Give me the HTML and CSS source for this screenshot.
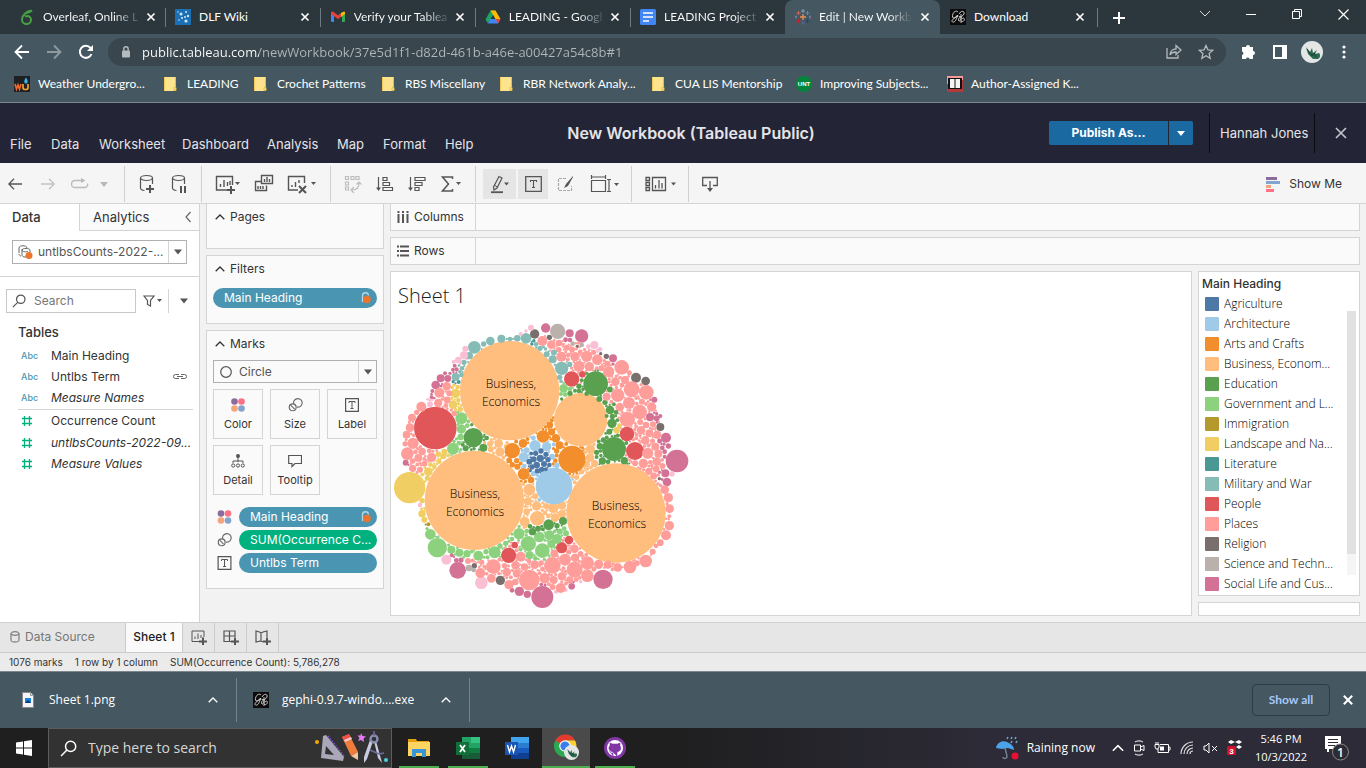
FILE: index.html
```html
<!DOCTYPE html>
<html lang="en">
<head>
<meta charset="utf-8">
<title>Edit | New Workbook | Tableau Public</title>
<link rel="stylesheet" href="styles.css">
</head>
<body>
<svg class="defs" aria-hidden="true">
  <symbol id="x" viewBox="0 0 10 10"><path d="M1.500 1.500l7 7M8.500 1.500l-7 7" fill="none" stroke="currentColor" stroke-width="1.700"/></symbol>
  <symbol id="caret" viewBox="0 0 8 5"><path d="M0 0h8L4 5z" fill="currentColor"/></symbol>
  <symbol id="up" viewBox="0 0 10 6"><path d="M.7 5.300L5 1l4.300 4.300" fill="none" stroke="currentColor" stroke-width="1.300"/></symbol>
  <symbol id="folder" viewBox="0 0 16 16"><path d="M2 1h10v11h1v3H2z" fill="#ffe38c"/><path d="M12.500 1v10M11 14.500v-3h2v3z" stroke="#e8bd3f" fill="#ffe38c"/><path d="M1.500 1v14" stroke="#f3cb5a"/></symbol>
  <symbol id="gephi" viewBox="0 0 16 16"><path fill="#0c0c0c" d="M0 0h16v16H0z"/><path d="M8 3c-2-2-5 0-5.500 3.500S5 10 7.500 6c-1 5-3 8-5 7s2-5 6-6M9 5c2-4 6-3 5 0-1 2-3 3-5 3 2-1 3 1 1.500 3S8 12 9 9m2 5V5m1 5c2-2 3 0 2 1.500s-2 1-3 .5" fill="none" stroke="#ddd" stroke-width=".9"/></symbol>
  <symbol id="colors" viewBox="0 0 14 14"><circle cx="3.500" cy="3.500" r="3.300" fill="#8a6d9c"/><circle cx="10.500" cy="3.500" r="3.300" fill="#fb7185"/><circle cx="3.500" cy="10.500" r="3.300" fill="#f4a57c"/><circle cx="10.500" cy="10.500" r="3.300" fill="#82a4cd"/></symbol>
  <symbol id="size" viewBox="0 0 15 15"><g fill="none" stroke="#666" stroke-width="1.200"><path d="M5.500 6A4.600 4.600 0 1 1 9 9.700"/><circle cx="4.500" cy="10" r="3.700"/><path d="M2.500 8l4 4"/></g></symbol>
  <symbol id="label" viewBox="0 0 14 14"><path d="M.6.6h12.800v12.800H.6z" fill="#fafafa" stroke="#555" stroke-width="1.200"/><path d="M4 5V3.500h6V5M7 3.500v7M5.500 10.500h3" fill="none" stroke="#555"/></symbol>
  <symbol id="db" viewBox="0 0 16 19"><path d="M1.500 4v10c0 1.500 2 2.300 4 2.500M13.500 4v6" fill="none" stroke="currentColor" stroke-width="1.200"/><ellipse cx="7.500" cy="4" rx="6" ry="2.500" fill="none" stroke="currentColor" stroke-width="1.200"/></symbol>
  <symbol id="lock" viewBox="0 0 10 12"><path d="M1.500 10V4a3 3 0 0 1 6-.5" fill="none" stroke="#b9d5e1" stroke-width="1.300"/><circle cx="6" cy="7.500" r="3.800" fill="#eb762b"/></symbol>
  <symbol id="hash" viewBox="0 0 12 12"><path d="M3.500 1v10M8.500 1v10M1 3.500h10M1 8.500h10" fill="none" stroke="#00b180" stroke-width="1.300"/></symbol>
  <symbol id="search" viewBox="0 0 16 16"><circle cx="10" cy="6" r="4.800" fill="none" stroke="currentColor" stroke-width="1.400"/><path d="M6.500 9.500L1 15" stroke="currentColor" stroke-width="1.400"/></symbol>
  <symbol id="avatar" viewBox="0 0 22 22"><circle cx="11" cy="11" r="11" fill="#e4e6e6"/><path d="M5 6l3 4 1 1 2-4 1 5 4-3-2 4 4-1c2 2 1 5-1 6h-5l-3-3-2-2z" fill="#2d6b50"/><path d="M6 8l5 7 2-3 2 4" stroke="#163f31" fill="none"/></symbol>
</svg>

<header class="tabstrip">
  <button class="tab"><svg class="i16" viewBox="0 0 16 16"><path d="M12.500 1.500C8 2 3 6 3 10.500a4.500 4.500 0 1 0 9 0C12 7.500 9 6 6 7.500M7 4c2-1 4 0 6-2.500" fill="none" stroke="#47a141" stroke-width="2"/></svg><span>Overleaf, Online L</span><svg class="i10"><use href="#x"/></svg></button>
  <button class="tab"><svg class="i16" viewBox="0 0 16 16"><path fill="#1b6fb5" d="M0 0h16v16H0z"/><g fill="#cfe6f7"><circle cx="6" cy="5" r="1.500"/><circle cx="11" cy="3" r="1"/><circle cx="13" cy="7" r="1.200"/><circle cx="11" cy="12" r="1.600"/><circle cx="7" cy="9" r="1.100"/><circle cx="3" cy="3" r=".7"/><circle cx="4" cy="11" r=".8"/><circle cx="10" cy="8" r="1"/></g></svg><span class="full">DLF Wiki</span><svg class="i10"><use href="#x"/></svg></button>
  <button class="tab"><svg class="i16" viewBox="0 0 16 16"><path d="M1 3h3v10H2a1 1 0 0 1-1-1z" fill="#4285f4"/><path d="M12 3h3v9a1 1 0 0 1-1 1h-2z" fill="#34a853"/><path d="M1 3l2-.5L8 6.500l3-2.500v4L8 10 1 5z" fill="#ea4335"/><path d="M11 4l3-1.500 1 .5v2l-4 3z" fill="#fbbc04"/></svg><span>Verify your Tablea</span><svg class="i10"><use href="#x"/></svg></button>
  <button class="tab"><svg class="i16" viewBox="0 0 16 16"><path d="M5.500 1.500h5L6 9.500l-3 5-2.500-4z" fill="#1ea362"/><path d="M5.500 1.500h5l5 8.500h-5z" fill="#ffba00"/><path d="M5 10h10.500L13 14.500H3z" fill="#4285f4"/><path d="M13 14.500l2.500-4.500h-5z" fill="#ea4335"/></svg><span>LEADING - Googl</span><svg class="i10"><use href="#x"/></svg></button>
  <button class="tab"><svg class="i16" viewBox="0 0 16 16"><rect width="16" height="16" rx="1.500" fill="#4285f4"/><path d="M3 4h10M3 8h10M3 12h6" stroke="#fff" stroke-width="1.700"/></svg><span>LEADING Project</span><svg class="i10"><use href="#x"/></svg></button>
  <button class="tab active"><svg class="i16" viewBox="0 0 16 16"><path d="M8 5v6M5 8h6" stroke="#f28e4c" stroke-width="1.300"/><path d="M8 0v4M6 2h4" stroke="#7fa5b8"/><path d="M8 12v4M6 14h4" stroke="#5a6591"/><path d="M3.500 2v4M1.500 4h4" stroke="#c9695b"/><path d="M12.500 2v4M10.500 4h4" stroke="#5f88b5"/><path d="M3.500 10v4M1.500 12h4" stroke="#c72035"/><path d="M12.500 10v4M10.500 12h4" stroke="#1f447e"/><path d="M1 6.500v3M0 8h2M15 6.500v3M14 8h2" stroke="#7a84a8"/></svg><span>Edit | New Workb</span><svg class="i10"><use href="#x"/></svg></button>
  <button class="tab"><svg class="i16"><use href="#gephi"/></svg><span class="full">Download</span><svg class="i10"><use href="#x"/></svg></button>
  <button class="newtab" aria-label="New tab"><svg width="12" height="12"><path d="M6 0v12M0 6h12" stroke="#fff" stroke-width="2"/></svg></button>
  <div class="winctl">
    <button aria-label="Search tabs"><svg width="12" height="8" viewBox="0 0 12 8"><path d="M1 1l5 5 5-5" fill="none" stroke="#ddd"/></svg></button>
    <button aria-label="Minimize"><svg width="10" height="10"><path d="M0 5.500h10" stroke="#fff"/></svg></button>
    <button aria-label="Restore"><svg width="10" height="10"><path d="M.5 2.500h7v7h-7zM2.500 2.500v-2h7v7h-2" fill="none" stroke="#fff"/></svg></button>
    <button aria-label="Close"><svg width="11" height="11"><path d="M.5.5l10 10M10.500.5l-10 10" stroke="#fff" stroke-width="1.200"/></svg></button>
  </div>
</header>

<div class="navbar">
  <button aria-label="Back"><svg width="16" height="16"><path d="M15 8H2M8 1.500L1.500 8 8 14.500" fill="none" stroke="#fff" stroke-width="1.800"/></svg></button>
  <button aria-label="Forward"><svg width="16" height="16"><path d="M1 8h13M8 1.500L14.500 8 8 14.500" fill="none" stroke="#8f9a9f" stroke-width="1.800"/></svg></button>
  <button aria-label="Reload"><svg width="16" height="16"><path d="M13.500 10A6 6 0 1 1 12.500 4L14 6" fill="none" stroke="#fff" stroke-width="2"/><path d="M15 1v6H9z" fill="#fff"/></svg></button>
  <div class="omnibox">
    <svg width="10" height="14" viewBox="0 0 10 14"><rect x="1" y="5.500" width="8" height="7" rx="1" fill="#b4babd"/><path d="M2.800 6V4a2.200 2.200 0 0 1 4.400 0v2" fill="none" stroke="#b4babd" stroke-width="1.400"/></svg>
    <input class="url" aria-label="Address" value="public.tableau.com/newWorkbook/37e5d1f1-d82d-461b-a46e-a00427a54c8b#1">
    <button aria-label="Share"><svg width="16" height="15"><path d="M1 4v10h11v-3M4 11c0-4 3-6 6-6V1.500L15 6l-5 4.500V8c-3 0-5 1-6 3z" fill="none" stroke="#b4babd" stroke-width="1.300"/></svg></button>
    <button aria-label="Bookmark"><svg width="16" height="16"><path d="M8 1.500l2 4.500 4.700.4-3.600 3.200 1.100 4.700L8 11.800l-4.200 2.500 1.100-4.700L1.300 6.400 6 6z" fill="none" stroke="#b4babd" stroke-width="1.300"/></svg></button>
  </div>
  <button aria-label="Extensions"><svg width="16" height="16"><path d="M6 3a2 2 0 0 1 4 0h3v4a2 2 0 0 1 0 4v4h-3.500a1.800 1.800 0 0 0-3.500 0H2v-4a1.800 1.800 0 0 0 0-3.500V3z" fill="#fff"/></svg></button>
  <button aria-label="Side panel"><svg width="14" height="14"><path d="M0 0h14v14H0zM2 2v10h7V2z" fill="#fff" fill-rule="evenodd"/></svg></button>
  <button class="profile" aria-label="Profile"><svg width="22" height="22"><use href="#avatar"/></svg></button>
  <button aria-label="Menu"><svg width="4" height="14"><g fill="#fff"><circle cx="2" cy="2" r="1.600"/><circle cx="2" cy="7" r="1.600"/><circle cx="2" cy="12" r="1.600"/></g></svg></button>
</div>

<nav class="bookmarks">
  <a href="#"><svg class="i16" viewBox="0 0 16 16"><path fill="#1e2023" d="M0 0h16v16H0z"/><path d="M1 8l1.500 5L4 9l1.500 4L7 8" fill="none" stroke="#f0662f" stroke-width="1.700"/><path d="M9 8v4c0 2 5 2 5 0V8" fill="none" stroke="#f6a127" stroke-width="1.700"/><path d="M12 1.500c3 4 1.500 6 0 6s-3-2 0-6z" fill="#3bb3ec"/></svg>Weather Undergro...</a>
  <a href="#"><svg class="i16"><use href="#folder"/></svg>LEADING</a>
  <a href="#"><svg class="i16"><use href="#folder"/></svg>Crochet Patterns</a>
  <a href="#"><svg class="i16"><use href="#folder"/></svg>RBS Miscellany</a>
  <a href="#"><svg class="i16"><use href="#folder"/></svg>RBR Network Analy...</a>
  <a href="#"><svg class="i16"><use href="#folder"/></svg>CUA LIS Mentorship</a>
  <a href="#"><svg class="i16" viewBox="0 0 16 16"><circle cx="8" cy="8" r="8" fill="#05853b"/><text x="8" y="10" class="unt">UNT</text></svg>Improving Subjects...</a>
  <a href="#"><svg class="i16" viewBox="0 0 16 16"><path fill="#b33a3c" d="M0 0h16v16H0z"/><path fill="#f79a9a" d="M0 0h16v4L0 8z"/><path fill="#111" d="M1 2h14v11H1z"/><path d="M3 3h4.500v9H3zM8.500 3H13v9H8.500z" fill="#f4f4f4"/></svg>Author-Assigned K...</a>
</nav>

<div class="apphead">
  <nav class="menu"><button>File</button><button>Data</button><button>Worksheet</button><button>Dashboard</button><button>Analysis</button><button>Map</button><button>Format</button><button>Help</button></nav>
  <h1>New Workbook (Tableau Public)</h1>
  <div class="account">
    <button class="publish">Publish As...</button><button class="publish more" aria-label="Publish options"><svg width="8" height="5"><use href="#caret"/></svg></button>
    <a class="user" href="#">Hannah Jones</a>
    <button class="quit" aria-label="Close workbook"><svg width="12" height="12" viewBox="0 0 12 12"><path d="M1 1l10 10M11 1L1 11" stroke="#c2c3c9" stroke-width="1.700"/></svg></button>
  </div>
</div>

<div class="toolbar">
  <div class="grp g1">
    <button class="w30" aria-label="Undo"><svg width="14" height="12"><path d="M14 6H1M6 .8L.8 6 6 11.200" fill="none" stroke="#555" stroke-width="1.300"/></svg></button>
    <button class="w36" aria-label="Redo"><svg width="14" height="12"><path d="M0 6h13M8 .8L13.200 6 8 11.200" fill="none" stroke="#c1c1c1" stroke-width="1.300"/></svg></button>
    <button class="w28" aria-label="Replay"><svg width="18" height="12"><path d="M13 2.500H4a3.300 3.300 0 0 0 0 7h10a3 3 0 0 0 2.500-4" fill="none" stroke="#bbb" stroke-width="1.300"/><path d="M10 0l4.500 2.500L10 5z" fill="#bbb"/></svg></button>
    <button class="w20" aria-label="Replay speed"><svg width="8" height="5" class="dim"><use href="#caret"/></svg></button>
  </div>
  <div class="grp g2">
    <button class="w32" aria-label="New data source"><svg width="16" height="20"><svg width="16" height="19"><use href="#db"/></svg><path d="M11 11v8M7 15h8" stroke="#555" stroke-width="2"/></svg></button>
    <button class="w32" aria-label="Pause updates"><svg width="16" height="20"><svg width="16" height="19"><use href="#db"/></svg><path d="M10 12v7M14 12v7" stroke="#555" stroke-width="2"/></svg></button>
  </div>
  <div class="grp g3">
    <button class="w36" aria-label="New worksheet"><svg width="26" height="20"><path d="M12 16H1.500V2.500h16V11M5.500 13v-3M9 13V6M12.500 12V8M15 11V7" fill="none" stroke="#555" stroke-width="1.400"/><path d="M16 12v8M12 16h8" stroke="#555" stroke-width="2"/><path d="M20 8h5l-2.500 3z" fill="#555"/></svg></button>
    <button class="w36" aria-label="Duplicate"><svg width="20" height="20"><path d="M7.500 1.500h11v8h-11zM7 7.500H1.500v9h11v-5M4 15v-3M6.500 15v-3M9 15v-3M10.500 8V5M13 8V3M15.500 8V5" fill="none" stroke="#555" stroke-width="1.400"/></svg></button>
    <button class="w40" aria-label="Clear"><svg width="30" height="20"><path d="M11 16H1.500V2.500h16V9M5 13v-2M8.500 13V8M12 9V6" fill="none" stroke="#555" stroke-width="1.400"/><path d="M12 12l7 7M19 12l-7 7" stroke="#555" stroke-width="2"/><path d="M24 8h5l-2.500 3z" fill="#555"/></svg></button>
  </div>
  <div class="grp g4">
    <button class="w32" aria-label="Swap"><svg width="18" height="18"><path d="M1.500 1.500h3v3h-3zM7 1.500h3v3H7zM12 1.500h3v3h-3zM1.500 7h3v3h-3zM1.500 12h3v3h-3zM8 15c5 0 7-3 7-7M10 12l-3 3 3 3M12.500 9.500L15 7l2.500 2.500" fill="none" stroke="#bcbcbc" stroke-width="1.200"/></svg></button>
    <button class="w32" aria-label="Sort ascending"><svg width="18" height="18"><path d="M2.500 2v12M7 2.500h4v3H7zM7 7.500h6.500v3H7zM7 12.500h9.500v3H7z" fill="none" stroke="#555" stroke-width="1.200"/><path d="M0 12.500h5L2.500 16z" fill="#555"/></svg></button>
    <button class="w32" aria-label="Sort descending"><svg width="18" height="18"><path d="M2.500 2v12M7 2.500h10v3H7zM7 7.500h7v3H7zM7 12.500h4v3H7z" fill="none" stroke="#555" stroke-width="1.200"/><path d="M0 12.500h5L2.500 16z" fill="#555"/></svg></button>
    <button class="w36" aria-label="Totals"><svg width="20" height="18"><path d="M11.500 4V2H1.500l6 7-6 7h10v-2" fill="none" stroke="#555" stroke-width="1.500"/><path d="M15 7h5l-2.500 3z" fill="#555"/></svg></button>
  </div>
  <div class="grp g5">
    <button class="w33 on" aria-label="Highlight"><svg width="20" height="20"><path d="M3.500 13L9 2.500l3 1.500L7 14l-3 2z" fill="none" stroke="#555" stroke-width="1.200"/><path d="M4 11l3.500 2" stroke="#555"/><path d="M1 18.200h12" stroke="#555" stroke-width="1.800"/><path d="M14 8.500h5l-2.500 3z" fill="#555"/></svg></button>
    <button class="w30 on" aria-label="Show labels"><svg width="17" height="16"><path d="M.7.7h15.600v14.600H.7z" fill="none" stroke="#555" stroke-width="1.300"/><path d="M5.500 6V4.500h6V6M8.500 4.500v7M7 11.500h3" fill="none" stroke="#555" stroke-width="1.100"/></svg></button>
    <button class="w32" aria-label="Format"><svg width="18" height="18"><path d="M9 3.500H1.500v12h13V11" fill="none" stroke="#aaa" stroke-width="1.200" stroke-dasharray="3 1"/><path d="M16 1l-7 8-2 4 4-2 5-9z" fill="#555"/></svg></button>
    <button class="w40" aria-label="Fit"><svg width="29" height="18"><path d="M1.500 5.500h14v11h-14zM1 2h15M1.500 0v4M15.500 0v4M19 5v11M17 4.500h4M17 16.500h4" fill="none" stroke="#555" stroke-width="1.200"/><path d="M24 8h5l-2.500 3z" fill="#555"/></svg></button>
  </div>
  <div class="grp g6"><button class="w40" aria-label="Show cards"><svg width="31" height="16"><path d="M1 1.500h3.500v3H1zM1 6.500h3.500v3H1zM1 11.500h3.500v3H1zM7.500 1.500h13v13h-13zM10.500 12.500V9M14 12.500V4M17 12.500V7" fill="none" stroke="#555" stroke-width="1.300"/><path d="M26 6.500h5L28.500 9.500z" fill="#555"/></svg></button></div>
  <div class="grp g7"><button class="w32" aria-label="Download"><svg width="16" height="16"><path d="M5 9.500H.7V1.500h14.600v8H11M8 5v8" fill="none" stroke="#555" stroke-width="1.300"/><path d="M5 12h6l-3 4z" fill="#555"/></svg></button></div>
  <button class="showme"><svg width="14" height="15"><path fill="#8a6d9c" d="M0 0h11v3H0z"/><path fill="#82a4cd" d="M0 4h14v3H0z"/><path fill="#f4a57c" d="M0 8h5v3H0z"/><path fill="#fb7185" d="M0 12h8v3H0z"/></svg>Show Me</button>
</div>

<main class="work">
  <aside class="data">
    <div class="panetabs"><button class="cur">Data</button><button class="other">Analytics<svg width="6" height="12"><path d="M5.500 1L1 6l4.500 5" fill="none" stroke="#666" stroke-width="1.200"/></svg></button></div>
    <div class="source"><div class="pick"><svg width="15" height="14"><path d="M9 12H7c-2 0-3-1-3-2V4M1 9c0 1 1 2 2 2M1 8V3c0-3 8-3 8 0M4 5c0-2 8-2 8 0v2M4 5c0 2 4 2 6 1.500" fill="none" stroke="#666"/><circle cx="11" cy="10.500" r="3.500" fill="#eb762b"/></svg><select aria-label="Data source"><option>untlbsCounts-2022-...</option></select><i><svg width="8" height="6"><use href="#caret"/></svg></i></div></div>
    <div class="find"><label class="findbox"><svg width="14" height="14"><use href="#search"/></svg><input placeholder="Search" aria-label="Search fields"></label><button aria-label="Filter fields"><svg width="19" height="12"><path d="M1 1h10L7.500 5.500V11l-3-1.500v-4z" fill="none" stroke="#555" stroke-width="1.200"/><path d="M14 4h5l-2.500 3z" fill="#555"/></svg></button><button class="viewas" aria-label="View options"><svg width="8" height="6"><use href="#caret"/></svg></button></div>
    <h2>Tables</h2>
    <ul class="fields">
      <li><b>Abc</b>Main Heading</li>
      <li><b>Abc</b>Untlbs Term<svg class="link" width="16" height="7"><path d="M7 1.500H3.500a2 2 0 0 0 0 4H7M9 1.500h3.500a2 2 0 0 1 0 4H9M5 3.500h6" fill="none" stroke="#666"/></svg></li>
      <li class="it"><b>Abc</b>Measure Names</li>
      <li class="first"><svg width="12" height="12"><use href="#hash"/></svg>Occurrence Count</li>
      <li class="it"><svg width="12" height="12"><use href="#hash"/></svg>untlbsCounts-2022-09...</li>
      <li class="it"><svg width="12" height="12"><use href="#hash"/></svg>Measure Values</li>
    </ul>
  </aside>

  <section class="cards">
    <div class="card pages"><h3><svg width="10" height="6"><use href="#up"/></svg>Pages</h3></div>
    <div class="card filters"><h3><svg width="10" height="6"><use href="#up"/></svg>Filters</h3><button class="pill">Main Heading<svg width="10" height="12"><use href="#lock"/></svg></button></div>
    <div class="card marks"><h3><svg width="10" height="6"><use href="#up"/></svg>Marks</h3>
      <div class="pick type"><svg width="12" height="12"><circle cx="6" cy="6" r="5.300" fill="none" stroke="#555" stroke-width="1.200"/></svg><select aria-label="Mark type"><option>Circle</option></select><i><svg width="8" height="6"><use href="#caret"/></svg></i></div>
      <div class="enc">
        <button><svg width="14" height="14"><use href="#colors"/></svg>Color</button>
        <button><svg width="15" height="14"><use href="#size"/></svg>Size</button>
        <button><svg width="14" height="14"><use href="#label"/></svg>Label</button>
        <button><svg width="14" height="14"><circle cx="7" cy="2" r="2" fill="#555"/><path d="M7 3v5M2 9V7h10v2" fill="none" stroke="#555"/><g fill="none" stroke="#555"><circle cx="2.200" cy="11.500" r="1.600"/><circle cx="7" cy="11.500" r="1.600"/><circle cx="11.800" cy="11.500" r="1.600"/></g></svg>Detail</button>
        <button><svg width="14" height="14"><path d="M.7 1.500h12.800v8H7l-3 3v-3H.7z" fill="none" stroke="#555" stroke-width="1.200"/></svg>Tooltip</button>
      </div>
      <div class="pillrow"><svg width="14" height="14"><use href="#colors"/></svg><button class="pill">Main Heading<svg width="10" height="12"><use href="#lock"/></svg></button></div>
      <div class="pillrow"><svg width="15" height="14"><use href="#size"/></svg><button class="pill green">SUM(Occurrence C...</button></div>
      <div class="pillrow"><svg width="14" height="14"><use href="#label"/></svg><button class="pill">Untlbs Term</button></div>
    </div>
  </section>

  <section class="viz">
    <div class="shelf"><span><svg width="12" height="12"><path d="M1.500 0v2M6 0v2M10.500 0v2M1.500 3v9M6 3v9M10.500 3v9" stroke="#555" stroke-width="2"/></svg>Columns</span></div>
    <div class="shelf"><span><svg width="12" height="12"><path d="M0 1.500h2M0 6h2M0 10.500h2M3 1.500h9M3 6h9M3 10.500h9" stroke="#555" stroke-width="2"/></svg>Rows</span></div>
    <div class="split">
      <div class="sheet"><h2>Sheet 1</h2><svg id="bubbles" width="300" height="298" viewBox="1 2 300 298" role="img" aria-label="Packed bubbles by main heading"></svg></div>
      <div class="side">
        <div class="legend"><h4>Main Heading</h4><ul>
          <li><i class="c1"></i>Agriculture</li><li><i class="c2"></i>Architecture</li><li><i class="c3"></i>Arts and Crafts</li><li><i class="c4"></i>Business, Econom...</li><li><i class="c5"></i>Education</li><li><i class="c6"></i>Government and L...</li><li><i class="c7"></i>Immigration</li><li><i class="c8"></i>Landscape and Na...</li><li><i class="c9"></i>Literature</li><li><i class="c10"></i>Military and War</li><li><i class="c11"></i>People</li><li><i class="c12"></i>Places</li><li><i class="c13"></i>Religion</li><li><i class="c14"></i>Science and Techn...</li><li><i class="c15"></i>Social Life and Cus...</li>
        </ul><div class="scroll"><div></div></div></div>
        <div class="extra"></div>
      </div>
    </div>
  </section>
</main>

<nav class="sheets">
  <button class="ds"><svg width="10" height="12"><path d="M1 2.500v7c0 2 8 2 8 0v-7" fill="none" stroke="#666"/><ellipse cx="5" cy="2.500" rx="4" ry="1.800" fill="none" stroke="#666"/></svg>Data Source</button>
  <button class="curr">Sheet 1</button>
  <button class="add" aria-label="New worksheet"><svg width="16" height="15"><path d="M8 11.500H1V1h12v6M4 9V6.500M7 9V3.500M10 8V5" fill="none" stroke="#555"/><path d="M12 7.500v8M8 11.500h8" stroke="#555" stroke-width="2"/></svg></button>
  <button class="add" aria-label="New dashboard"><svg width="16" height="15"><path d="M8 11.500H1V1h11v6M1 6h11M6.500 1v10" fill="none" stroke="#555" stroke-width="1.200"/><path d="M12 7.500v8M8 11.500h8" stroke="#555" stroke-width="2"/></svg></button>
  <button class="add" aria-label="New story"><svg width="16" height="15"><path d="M8 12l-2-1-5 1V1l3.500 1L6 3l2-1 4-1v6M6 3v8" fill="none" stroke="#555" stroke-width="1.200"/><path d="M12 7.500v8M8 11.500h8" stroke="#555" stroke-width="2"/></svg></button>
</nav>
<footer class="status"><span>1076 marks</span><span>1 row by 1 column</span><span>SUM(Occurrence Count): 5,786,278</span></footer>

<div class="downloads">
  <button class="dl"><svg class="i16" viewBox="0 0 16 16"><path d="M2.500.5h8l3 3v12h-11z" fill="#f5f5f5" stroke="#8a8a8a"/><path d="M10.500.5v3h3" fill="#ddd" stroke="#999"/><path d="M5 6h6v5H5z" fill="#1683d8"/><path d="M5 11l3-3 3 3z" fill="#0a3a78"/></svg><span>Sheet 1.png</span><svg width="10" height="6"><use href="#up"/></svg></button>
  <button class="dl"><svg class="i16"><use href="#gephi"/></svg><span>gephi-0.9.7-windo....exe</span><svg width="10" height="6"><use href="#up"/></svg></button>
  <button class="showall">Show all</button>
  <button class="dlx" aria-label="Close downloads"><svg width="12" height="12"><use href="#x"/></svg></button>
</div>

<div class="taskbar">
  <button class="start" aria-label="Start"><svg width="16" height="16"><path d="M0 2.500l7-1v6H0zM8 1.300L16 0v7.500H8zM0 8.500h7v6l-7-1zM8 8.500h8V16l-8-1.300z" fill="#fff"/></svg></button>
  <label class="tsearch"><svg width="17" height="17" viewBox="0 0 16 16"><use href="#search"/></svg><input placeholder="Type here to search" aria-label="Type here to search">
    <svg width="76" height="34" viewBox="0 0 76 34"><circle cx="4" cy="11" r="2" fill="#f5a800"/><path d="M10 5l3-1 18 22-1 4-22-3z" fill="#a9a7b8"/><path d="M13 15l8 9-9-1z" fill="#333"/><path d="M15 5l16 20" stroke="#8152d8" stroke-dasharray="1.500 1.500" stroke-width="1.500"/><path d="M29 6l7-3 9 18-7 4z" fill="#f07c3c"/><path d="M29 6l7-3 2 4-7 3z" fill="#f0523f"/><path d="M31 9l7-3 1 2-7 3z" fill="#f4c9da"/><path d="M38 25l7-4 0 8z" fill="#efc7a4"/><path d="M48 2l1.500 3 3.500.5-2.500 2 .5 3.500-3-2-3 1 1.500-3-2-2.500 3 0z" fill="#e97af5"/><path d="M60 10l-6 18-3 4v-6l6-17zM63 10l5 18 1 4-4-5-4-17z" fill="#c9cae0"/><circle cx="61" cy="8" r="3.500" fill="none" stroke="#8d8fb2" stroke-width="2.300"/><path d="M61 0v5M57 19l9 4 5-1" stroke="#6d6f9d" stroke-width="1.500" fill="none"/><circle cx="73" cy="29" r="2" fill="#4cd0e0"/></svg></label>
  <button class="app run" aria-label="File Explorer"><svg width="22" height="20"><path d="M0 1h8l1 2h12v4H0z" fill="#e2a113"/><path d="M0 4h22v14H0z" fill="#fdd462"/><path d="M4 19v-8h14v8h-4v-4H8v4z" fill="#3a94d8"/></svg></button>
  <button class="app run" aria-label="Excel"><svg width="24" height="22"><path d="M6 0h18v22H6z" fill="#21a366"/><path d="M15 0h9v6h-9z" fill="#33c481"/><path d="M6 11h18v5H6z" fill="#107c41"/><path d="M6 16h18v6H6z" fill="#185c37"/><path d="M0 5h13v13H0z" fill="#0f7038"/><path d="M4 8l5 7M9 8l-5 7" stroke="#fff" stroke-width="1.800"/></svg></button>
  <button class="app" aria-label="Word"><svg width="24" height="22"><path d="M6 0h18v6H6z" fill="#41a5ee"/><path d="M6 6h18v5H6z" fill="#2b7cd3"/><path d="M6 11h18v5H6z" fill="#185abd"/><path d="M6 16h18v6H6z" fill="#103f91"/><path d="M0 5h13v13H0z" fill="#1a55b5"/><path d="M2.500 8l2 7 2-6 2 6 2-7" stroke="#fff" stroke-width="1.400" fill="none"/></svg></button>
  <button class="app run hot" aria-label="Chrome"><svg width="26" height="26" viewBox="0 0 26 26"><circle cx="12" cy="12" r="11" fill="#2da94f"/><path d="M2.500 6.500a11 11 0 0 1 19.500 0H12v6z" fill="#e33b2e"/><path d="M12 6.500h10a11 11 0 0 1-9 16.500l5-11z" fill="#fdd02f"/><circle cx="12" cy="12" r="5.800" fill="#fff"/><circle cx="12" cy="12" r="4.600" fill="#3b7ded"/><svg x="11" y="11" width="15" height="15"><use href="#avatar"/></svg></svg></button>
  <button class="app run" aria-label="GitHub Desktop"><svg width="22" height="22"><circle cx="11" cy="11" r="11" fill="#7f37a4"/><circle cx="11" cy="11" r="8" fill="#fff"/><path d="M9 19v-3c-2 .5-3-.5-3.500-2M9 15c-5-1-4.500-5-3-6.500L6 6l2.500 1h5L16 6v3c1.500 2 1 5-3 6v4z" fill="#7f37a4" stroke="#7f37a4" stroke-width=".6"/></svg></button>
  <div class="tray">
    <button class="weather"><svg width="24" height="26"><path d="M1 13C2 7 8 5 12 7s7 4 7 8l-6-2-6 1z" fill="#4ba3e8"/><path d="M10 13l2 8c0 3-4 3-4 1" fill="none" stroke="#77808e" stroke-width="1.500"/><path d="M12 4l1-2M16 4l1-2M16 8l1-2M20 4l1-2M21 8l1-2" stroke="#6ea8dd" stroke-width="1.500"/><circle cx="20" cy="21" r="3.500" fill="#e81132"/></svg>Raining now</button>
    <button aria-label="Hidden icons"><svg width="12" height="8" viewBox="0 0 10 6"><use href="#up"/></svg></button>
    <button aria-label="Meet now"><svg width="12" height="16"><path d="M1.500 5h6v6h-6zM7.500 7L11 5.500v5L7.500 9M2 2c2-1.500 6-1.500 8 0M2 14c2 1.500 6 1.500 8 0" fill="none" stroke="#fff"/></svg></button>
    <button aria-label="Battery"><svg width="17" height="12"><path d="M6 2.500h8.500v8H4V7M14.500 5H16v3h-1.500M1 2.500h4V5L4 7H2L1 5zM2 0v2M4 0v2" fill="none" stroke="#fff"/><path d="M6 4.500h4v4H6z" fill="#fff"/></svg></button>
    <button aria-label="Network"><svg width="14" height="14"><path d="M1 13A12 12 0 0 1 13 1M4 13a9 9 0 0 1 9-9M7 13a6 6 0 0 1 6-6M10 13a3 3 0 0 1 3-3" fill="none" stroke="#ddd" stroke-width="1.200"/></svg></button>
    <button aria-label="Muted"><svg width="15" height="12"><path d="M1 4h2l3-3v10L3 8H1zM9 4l5 5M14 4L9 9" fill="none" stroke="#fff"/></svg></button>
    <button aria-label="Dropbox"><svg width="16" height="16"><path d="M4 0l4 2-4 2-3-2zM12 0l3 2-3 2-4-2zM12 5l3 2-3 2-3-2z" fill="#fff"/><rect y="6" width="9" height="9" rx="1.500" fill="#d4112d"/><text x="4.500" y="13.500" class="three">3</text></svg></button>
    <time class="clock">5:46 PM<br>10/3/2022</time>
    <button aria-label="Notifications"><svg width="26" height="26"><path d="M1 1h16v13H5v3H3v-3H1z" fill="#fff"/><path d="M4 4.500h10M4 7.500h10M4 10.500h7" stroke="#2b2a35" stroke-width="1.200"/><circle cx="16.500" cy="17" r="8" fill="#2c2c34" stroke="#888"/><text x="16.500" y="21.500" class="one">1</text></svg></button>
  </div>
</div>
<script src="bubbles.js"></script>
</body>
</html>
```
FILE: styles.css
```css
* { box-sizing: border-box; }
body { margin: 0; min-height: 100vh; display: flex; flex-direction: column; font: 12px/16px Inter, "Liberation Sans", sans-serif; color: #333; background: #f2f2f2; }
button { border: 0; padding: 0; background: none; font: inherit; color: inherit; display: flex; align-items: center; justify-content: center; }
a { color: inherit; text-decoration: none; }
ul { list-style: none; margin: 0; padding: 0; }
h1, h2, h3, h4 { margin: 0; font-weight: 400; }
svg { flex: none; }
input, select { font: inherit; color: inherit; border: 0; outline: 0; background: none; padding: 0; min-width: 0; appearance: none; }
.defs { position: absolute; width: 0; height: 0; }
.i16 { width: 16px; height: 16px; }
.i10 { width: 10px; height: 10px; }
.tabstrip, .navbar, .bookmarks, .downloads, .taskbar { font-family: "Open Sans", "Noto Sans", sans-serif; color: #fff; }

.tabstrip { height: 34px; display: flex; background: #2c373d; padding-left: 10px; font-family: Lato, "Open Sans", sans-serif; font-size: 12px; }
.tab { width: 155px; padding: 0 10px; gap: 8px; position: relative; }
.tab span { flex: 1; text-align: left; white-space: nowrap; color: transparent; background: linear-gradient(to right, #fff 75%, #455760 100%); background-clip: text; -webkit-background-clip: text; }
.tab .full { color: #fff; background: none; }
.tab + .tab:not(.active)::before { content: ""; position: absolute; left: 0; top: 8px; height: 19px; width: 1px; background: #6f7a80; }
.tab.active { background: #455760; border-radius: 8px 8px 0 0; }
.tab.active + .tab::before { display: none; }
.newtab { width: 42px; border-left: 1px solid #6f7a80; margin: 8px 0 7px 2px; }
.winctl { margin-left: auto; display: flex; padding-bottom: 6px; }
.winctl button { width: 46px; }

.navbar { height: 35px; display: flex; align-items: center; background: #455760; padding-left: 14px; }
.navbar > button { width: 16px; margin-right: 16px; }
.omnibox { flex: 1; height: 28px; margin: 0 14px 0 -2px; border-radius: 14px; background: #39464d; display: flex; align-items: center; padding: 0 10px 0 13px; gap: 12px; }
.url { flex: 1; font-size: 13px; line-height: 20px; margin-left: -1px; color: transparent; background: linear-gradient(to right, #fff 117px, #b0b7bb 117px); background-clip: text; -webkit-background-clip: text; }
.omnibox button { width: 20px; }
.navbar > .profile { width: 22px; margin: 0 13px 0 -3px; }
.navbar > button:last-child { margin-right: 14px; }
.bookmarks { height: 34px; display: grid; grid-template-columns: 149px 90px 128px 118px 152px 145px 151px 1fr; align-items: center; padding: 0 0 4px 14px; background: #455760; border-bottom: 1px solid #7b878d; font-family: Lato, "Open Sans", sans-serif; font-size: 12px; }
.bookmarks a { display: flex; align-items: center; gap: 8px; white-space: nowrap; }
.unt { font: 700 6px "Liberation Sans", sans-serif; fill: #fff; text-anchor: middle; }

.apphead { height: 60px; background: #232536; color: #e4e4e8; display: grid; grid-template-columns: 1fr auto 1fr; align-items: center; }
.menu { display: grid; grid-template-columns: 41px 48px 83px 85px 70px 46px 62px 40px; padding: 22px 0 0 10px; font-size: 13px; }
.menu button { justify-content: flex-start; }
.apphead h1 { font-size: 16px; line-height: 20px; font-weight: 600; padding-left: 16px; white-space: nowrap; }
.account { display: flex; justify-content: flex-end; align-items: center; font-size: 13px; }
.publish { width: 119px; height: 24px; background: #1a6aa1; color: #fff; font-size: 12px; font-weight: 700; border-radius: 2px 0 0 2px; }
.publish.more { width: 24px; margin: 0 16px 0 1px; border-radius: 0 2px 2px 0; }
.user { height: 40px; line-height: 40px; padding: 0 10px; border: solid #0b0c12; border-width: 0 1px; width: 106px; white-space: nowrap; }
.quit { width: 51px; height: 30px; }

.toolbar { height: 41px; display: flex; background: #f5f5f5; border-bottom: 1px solid #d4d4d4; padding: 3px 0 1px; color: #555; }
.grp { display: flex; align-items: center; border-right: 1px solid #d0d0d0; }
.dim { color: #b8b8b8; }
.g1 { width: 125px; } .g2 { width: 77px; padding-left: 6px; } .g3 { width: 129px; padding-left: 8px; }
.g4 { width: 145px; padding-left: 6px; } .g5 { width: 156px; padding-left: 7px; gap: 2px; } .g6 { width: 57px; padding-left: 8px; }
.g7 { padding-left: 5px; border: 0; }
.grp button { height: 30px; }
.w20 { width: 20px; } .w28 { width: 28px; } .w30 { width: 30px; } .w32 { width: 32px; } .w33 { width: 33px; } .w36 { width: 36px; } .w40 { width: 40px; }
.on { background: #e5e5e5; }
.showme { margin-left: auto; padding-right: 24px; gap: 9px; color: #333; }

.work { flex: 1; display: flex; border-bottom: 1px solid #d0d0d0; }
.data { width: 200px; background: #fff; border-right: 1px solid #d4d4d4; flex: none; }
.panetabs { display: flex; height: 27px; font-size: 13px; }
.cur { width: 79px; justify-content: flex-start; padding: 0 0 1px 12px; font-weight: 500; }
.other { flex: 1; justify-content: space-between; padding: 0 8px 0 13px; background: #fafafa; border: solid #d4d4d4; border-width: 0 0 1px 1px; }
.source { padding: 9px 12px 12px; border-bottom: 1px solid #d4d4d4; }
.pick { display: flex; align-items: center; height: 24px; border: 1px solid #b0b0b0; background: #fff; color: #555; padding-left: 5px; gap: 5px; }
.pick select { flex: 1; }
.pick i { width: 18px; align-self: stretch; display: flex; align-items: center; justify-content: center; border-left: 1px solid #d4d4d4; }
.find { display: flex; padding: 12px 0 0 6px; height: 36px; color: #555; }
.findbox { width: 130px; flex: none; border: 1px solid #c8c8c8; display: flex; align-items: center; gap: 8px; padding-left: 5px; }
.findbox input { width: 80px; }
input::placeholder { color: #767676; opacity: 1; }
.find button { width: 32px; }
.find .viewas { width: 31px; border-left: 1px solid #d4d4d4; }
.data h2 { font-weight: 500; padding: 11px 0 5px 18px; font-size: 13px; }
.fields { margin: 0 6px 0 18px; }
.fields li { height: 21px; display: flex; align-items: center; white-space: nowrap; }
.fields li > svg:first-child { margin: 0 18px 0 3px; }
.fields b { width: 33px; padding-left: 3px; font-size: 9px; font-weight: 500; color: #4b96b1; font-style: normal; }
.fields .it { font-style: italic; }
.fields .first { border-top: 1px solid #d4d4d4; height: 23px; margin-top: 1px; }
.fields .link { margin-left: auto; margin-right: 5px; }

.cards { width: 190px; flex: none; padding: 0 6px; display: flex; flex-direction: column; gap: 6px; }
.card { border: 1px solid #d4d4d4; background: #fafafa; padding: 0 6px; }
.pages { height: 45px; border-top: 0; } .filters { height: 69px; } .marks { height: 259px; }
.card h3 { height: 26px; display: flex; align-items: center; gap: 5px; padding-left: 2px; color: #333; font-size: 12px; }
.filters .pill { margin-top: 6px; }
.pill { width: 100%; height: 20px; border-radius: 10px; background: #4a96b2; color: #fff; justify-content: space-between; padding: 0 6px 0 11px; white-space: nowrap; }
.pill.green { background: #00b180; }
.type { margin: 3px 0 6px; height: 23px; padding-left: 6px; gap: 7px; background: #fafafa; }
.enc { display: grid; grid-template-columns: repeat(3, 50px); gap: 6px 7px; margin-bottom: 12px; font-size: 11px; }
.enc button { height: 50px; border: 1px solid #d4d4d4; flex-direction: column; gap: 4px; padding-top: 2px; }
.pillrow { display: flex; align-items: center; margin-bottom: 3px; padding-left: 4px; }
.pillrow > svg { width: 15px; margin-right: 7px; }

.viz { flex: 1; min-width: 0; padding-right: 6px; display: flex; flex-direction: column; gap: 6px; padding-bottom: 6px; }
.shelf { height: 28px; border: 1px solid #d4d4d4; background: #fafafa; display: flex; }
.shelf:first-child { border-top: 0; height: 27px; }
.shelf span { width: 85px; border-right: 1px solid #d4d4d4; display: flex; align-items: center; gap: 5px; padding-left: 6px; }
.split { flex: 1; display: flex; gap: 6px; }
.sheet { flex: 1; background: #fff; border: 1px solid #d4d4d4; }
.sheet h2 { font: 300 20px/28px "Open Sans", sans-serif; padding: 10px 0 7px 7px; height: 45px; color: #222; }
.sheet svg { display: block; }
.side { width: 162px; display: flex; flex-direction: column; gap: 6px; }
.legend { flex: 1; background: #fff; border: 1px solid #d4d4d4; padding: 2px 3px 0; position: relative; }
.legend h4 { font: 500 12px/20px Inter, sans-serif; }
.legend li { display: flex; align-items: center; height: 20px; gap: 5px; padding-left: 3px; font: 300 12px/20px "Open Sans", sans-serif; color: #000; white-space: nowrap; }
.legend i { width: 14px; height: 14px; border-radius: 1px; }
.scroll { position: absolute; right: 3px; top: 39px; bottom: 20px; width: 9px; background: #f5f5f5; }
.scroll div { height: 92%; background: #e1e1e1; }
.extra { height: 14px; background: #fff; border: 1px solid #d4d4d4; }
.c1 { background: #4e79a7; } .c2 { background: #a0cbe8; } .c3 { background: #f28e2b; } .c4 { background: #ffbe7d; } .c5 { background: #59a14f; }
.c6 { background: #8cd17d; } .c7 { background: #b6992d; } .c8 { background: #f1ce63; } .c9 { background: #499894; } .c10 { background: #86bcb6; }
.c11 { background: #e15759; } .c12 { background: #ff9d9a; } .c13 { background: #79706e; } .c14 { background: #bab0ac; } .c15 { background: #d37295; }
#bubbles text { font: 300 12px "Open Sans", sans-serif; fill: #000; text-anchor: middle; }

.sheets { height: 29px; display: flex; background: #e6e6e6; color: #777; }
.sheets button { border-right: 1px solid #cbcbcb; }
.sheets .ds { width: 126px; justify-content: flex-start; gap: 5px; padding-left: 10px; padding-bottom: 2px; }
.sheets .curr { width: 57px; background: #fafafa; color: #222; font-weight: 500; padding-bottom: 2px; white-space: nowrap; }
.sheets .add { width: 32px; }
.status { height: 19px; border-top: 1px solid #cbcbcb; background: #ebebeb; display: flex; gap: 12px; padding-left: 9px; font-size: 10px; line-height: 18px; }

.downloads { height: 57px; background: #455760; border-top: 1px solid #7b878d; display: flex; align-items: center; font-size: 12px; }
.dl { width: 237px; height: 44px; border-right: 1px solid #76838a; padding: 0 18px 0 20px; gap: 13px; }
.dl + .dl { width: 233px; padding-left: 16px; }
.dl span { flex: 1; text-align: left; white-space: nowrap; }
.showall { margin-left: auto; width: 78px; height: 32px; border: 1px solid #2f3c43; border-radius: 4px; color: #a8c7fa; font-family: Lato, sans-serif; font-weight: 700; }
.dlx { width: 36px; }

.taskbar { height: 40px; display: flex; background: linear-gradient(to right, #1f1f20 50%, #2c2b37 72%); font-size: 12px; }
.start { width: 48px; }
.tsearch { width: 344px; border: 1px solid #5d5d5d; background: #323232; display: flex; align-items: center; padding-left: 11px; font-size: 14px; }
.tsearch input { width: 150px; flex: 1; margin-left: 11px; }
.tsearch input::placeholder { color: #d6d6d6; }
.tsearch svg:last-child { margin-right: 2px; }
.app { width: 40px; margin: 0 2px 0 7px; border: solid transparent; border-width: 2px 0; }
.app.run { border-bottom-color: #4cae4c; }
.app.hot { width: 48px; margin: 0 -2px 0 3px; background: #4a4a4b; border-top: 0; }
.tray { margin-left: auto; display: flex; align-items: center; gap: 9px; padding-right: 16px; }
.weather { gap: 8px; font-size: 12px; margin-right: 8px; white-space: nowrap; }
.clock { text-align: center; font-size: 11px; line-height: 18px; width: 58px; margin-right: 5px; white-space: nowrap; }
.three { font: 700 8px "Liberation Sans", sans-serif; fill: #fff; text-anchor: middle; }
.one { font: 600 12px "Open Sans", sans-serif; fill: #fff; text-anchor: middle; }
```
FILE: bubbles.js
```js
// Packed bubble chart. Marks are x, y, r triples in thirds of a pixel, grouped by heading.
const marks = {
  '#ffbe7d': [359,227,149, 253,556,149, 678,594,149, 572,314,80, 442,610,22, 418,524,18, 440,573,14, 404,620,15, 490,578,16, 495,608,13, 516,571,13, 516,597,12, 410,590,10, 468,573,9, 326,385,13, 330,411,14, 300,387,9, 348,395,7, 601,402,14, 600,428,13, 590,447,10, 560,487,8, 575,470,8],
  '#e15759': [136,339,64, 545,192,23, 577,178,10, 711,357,22, 735,408,27, 356,721,23, 515,698,17, 537,675,13, 374,690,10],
  '#59a14f': [617,206,37, 250,368,29, 672,402,36, 660,285,13, 666,325,14, 658,350,9, 703,437,11, 476,629,16, 519,618,12, 444,641,9, 501,632,8, 290,369,7, 227,400,9, 630,394,10, 640,375,8, 620,412,8, 637,438,11, 540,235,8, 567,228,7, 590,236,7, 628,252,9, 645,262,8, 515,252,5, 420,634,7, 650,303,6],
  '#f28e2b': [546,433,41, 367,407,23, 459,364,19, 399,385,13, 401,477,18, 423,495,10, 496,437,7, 380,437,8, 382,455,9, 500,408,8],
  '#a0cbe8': [492,513,55, 435,392,17, 470,395,14, 401,427,15, 486,425,9, 430,476,8, 403,453,7],
  '#4e79a7': [453,408,8, 437,415,8, 468,418,8, 451,430,11, 431,433,9, 474,434,8, 418,440,9, 462,447,9, 440,450,10, 478,450,7, 426,456,8, 455,463,8, 442,468,8, 467,463,6],
  '#f1ce63': [59,518,47, 197,235,14, 203,216,7, 205,255,7, 211,283,8, 163,410,9, 160,424,9, 115,470,13, 133,455,7, 148,440,7, 96,596,11, 103,614,9, 680,346,10],
  '#86bcb6': [253,97,19, 301,78,13, 334,71,12, 281,87,8, 382,70,10, 408,70,16, 238,122,11, 222,142,8, 515,160,20, 488,133,12, 509,187,8, 360,72,7, 438,88,7, 450,100,8, 470,118,9, 214,180,7, 216,160,7],
  '#499894': [206,201,6, 425,80,3],
  '#b6992d': [115,628,6],
  '#8cd17d': [521,220,13, 540,222,7, 214,310,18, 214,342,14, 212,366,10, 189,401,18, 142,698,29, 121,658,16, 184,704,12, 208,713,12, 231,716,11, 265,722,15, 314,712,18, 387,656,17, 415,686,23, 457,707,22, 448,666,16, 478,661,15, 501,672,15, 484,687,12, 288,710,8, 330,693,8, 347,685,8, 366,672,7, 528,655,9],
  '#d37295': [861,438,34, 467,39,14, 539,55,12, 575,63,20, 540,75,7, 669,130,12, 152,190,12, 137,210,13, 165,175,6, 127,228,6, 125,247,6, 180,175,5, 194,152,6, 200,163,6, 793,254,9, 828,368,15, 835,393,8, 203,766,25, 457,846,33, 639,793,29, 388,829,14, 412,838,11, 366,826,7, 545,814,10, 826,475,12, 831,501,13, 47,443,9, 800,310,9, 811,303,6, 800,296,5, 824,410,7, 824,425,6, 185,721,6, 199,736,7],
  '#79706e': [434,57,14, 478,67,8, 738,188,15, 767,198,13, 811,336,12, 331,796,14, 253,752,8, 649,124,8, 632,116,5, 562,94,5, 808,491,5],
  '#bab0ac': [503,49,23, 237,759,10, 251,765,7, 548,86,7, 575,90,7],
  '#fabfd2': [423,38,9, 222,121,12, 205,135,10, 226,101,9, 191,140,6, 613,90,12, 169,734,15, 274,803,19, 846,477,8, 90,570,7, 392,57,6, 630,103,7, 572,800,5, 408,48,5, 527,825,6, 498,830,6, 120,255,5],
  '#ff9d9a': [457,78,15, 484,89,13, 507,84,10, 514,125,15, 530,98,9, 555,125,14, 590,124,17, 567,154,17, 598,155,14, 622,134,16, 656,170,17, 695,157,22, 725,223,24, 769,232,22, 683,241,20, 717,264,18, 749,291,22, 712,313,23, 785,276,14, 676,200,13, 705,195,12, 650,245,12, 148,233,15, 178,235,9, 94,275,15, 66,308,12, 60,338,13, 69,385,17, 52,416,19, 85,429,12, 125,427,14, 310,755,22, 418,795,31, 487,751,25, 554,764,24, 592,744,20, 592,782,19, 525,734,18, 271,774,15, 304,790,13, 357,809,14, 376,801,10, 512,819,15, 626,748,14, 683,757,13, 720,756,19, 767,738,19, 838,632,14, 828,661,15, 835,548,14, 824,524,13, 811,683,10, 788,710,9, 740,745,9, 653,749,12, 392,725,15, 464,790,16, 491,795,12, 773,415,17, 796,395,12, 760,445,14, 800,440,13, 68,460,11, 90,464,9, 778,355,12, 768,330,10, 275,742,8, 234,738,9]
};
const outline = [390,60, 425,60, 467,60, 540,75, 600,90, 640,115, 695,140, 740,195, 785,225, 798,280, 812,320, 822,380, 830,440, 830,500, 840,560, 840,640, 820,680, 780,725, 730,755, 660,765, 600,790, 545,808, 500,825, 430,825, 385,818, 340,800, 290,790, 255,765, 190,725, 130,690, 110,640, 90,600, 92,500, 55,460, 42,410, 52,330, 70,295, 105,262, 125,235, 155,195, 190,155, 235,105, 290,80];

const svg = document.getElementById('bubbles');
const NS = 'http://www.w3.org/2000/svg';
const all = [];
function add(x, y, r, fill) {
  const c = document.createElementNS(NS, 'circle');
  c.setAttribute('cx', x / 3);
  c.setAttribute('cy', y / 3);
  c.setAttribute('r', r / 3);
  c.setAttribute('fill', fill);
  svg.appendChild(c);
  all.push({ x, y, r, fill });
}
for (const fill in marks) {
  const m = marks[fill];
  for (let i = 0; i < m.length; i += 3) add(m[i], m[i + 1], m[i + 2], fill);
}
const seeds = all.filter(c => c.r < 60 || c.fill === '#e15759');

let state = 7;
function random() {
  state = (state * 1664525 + 1013904223) % 4294967296;
  return state / 4294967296;
}
function inside(x, y) {
  let hit = false;
  for (let i = 0, j = outline.length - 2; i < outline.length; j = i, i += 2) {
    const xi = outline[i], yi = outline[i + 1], xj = outline[j], yj = outline[j + 1];
    if ((yi > y) !== (yj > y) && x < (xj - xi) * (y - yi) / (yj - yi) + xi) hit = !hit;
  }
  return hit;
}
const minor = ['#e15759', '#79706e', '#bab0ac'];
function place(cap, least, tries) {
  for (let n = 0; n < tries; n++) {
    const x = 30 + random() * 820, y = 30 + random() * 810;
    if (!inside(x, y)) continue;
    let room = 99;
    for (const c of all) {
      room = Math.min(room, Math.hypot(c.x - x, c.y - y) - c.r);
      if (room < least) break;
    }
    if (room < least) continue;
    let near = 1e9, fill = '';
    for (const c of seeds) {
      const d = Math.hypot(c.x - x, c.y - y) - c.r;
      if (d < near) { near = d; fill = c.fill; }
    }
    if (minor.includes(fill)) fill = '#ff9d9a';
    add(x, y, Math.min(room + 1, cap), fill);
  }
}
place(13, 9, 9000);
place(9, 6, 12000);
place(6, 4, 16000);
place(5, 2, 30000);

for (const [x, y] of [[121, 69], [85, 179], [227, 191]]) {
  ['Business,', 'Economics'].forEach((word, i) => {
    const t = document.createElementNS(NS, 'text');
    t.setAttribute('x', x);
    t.setAttribute('y', y + 4 + i * 18);
    t.textContent = word;
    svg.appendChild(t);
  });
}
```
